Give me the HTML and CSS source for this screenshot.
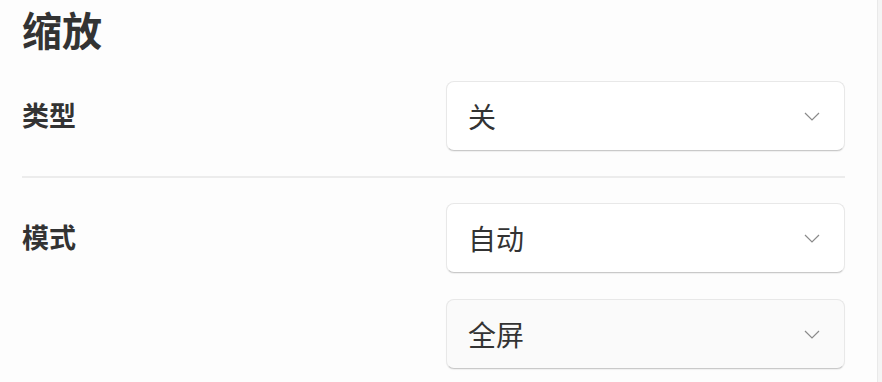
FILE: index.html
```html
<!DOCTYPE html>
<html lang="zh">
<head>
    <meta charset="UTF-8">
    <meta name="viewport" content="width=device-width, initial-scale=1.0">
    <title>缩放</title>
    <link rel="stylesheet" href="styles.css">
</head>
<body>
<div class="page">
    <div class="settings">
        <h1>缩放</h1>
        <div class="setting-row">
            <div class="setting-label">类型</div>
            <div class="setting-controls">
                <div class="select">
                    <span>关</span>
                    <svg class="chevron" viewBox="0 0 16 9"><path d="M1 1l7 7 7-7"/></svg>
                </div>
            </div>
        </div>
        <div class="divider"></div>
        <div class="setting-row">
            <div class="setting-label">模式</div>
            <div class="setting-controls">
                <div class="select">
                    <span>自动</span>
                    <svg class="chevron" viewBox="0 0 16 9"><path d="M1 1l7 7 7-7"/></svg>
                </div>
                <div class="select muted">
                    <span>全屏</span>
                    <svg class="chevron" viewBox="0 0 16 9"><path d="M1 1l7 7 7-7"/></svg>
                </div>
            </div>
        </div>
    </div>
    <div class="scrollbar"></div>
</div>
</body>
</html>
```

FILE: styles.css
```css
html, body {
    margin: 0;
    height: 100%;
}

body {
    font-family: "Noto Sans CJK SC", "Noto Sans", sans-serif;
    background-color: #fdfdfd;
    color: #333;
    overflow: hidden;
}

.page {
    display: flex;
    height: 100%;
}

.settings {
    flex: 1;
    padding: 0 32px 0 22px;
}

h1 {
    margin: 0;
    padding-top: 1px;
    font-size: 40px;
    line-height: 56px;
    font-weight: 700;
    color: #333;
}

.setting-row {
    display: flex;
    justify-content: space-between;
    align-items: flex-start;
}

.setting-row:first-of-type {
    margin-top: 24px;
}

.setting-label {
    font-size: 27px;
    font-weight: 700;
    line-height: 36px;
    padding-top: 16px;
}

.setting-controls {
    display: flex;
    flex-direction: column;
    gap: 26px;
    width: 399px;
}

.select {
    display: flex;
    align-items: center;
    justify-content: space-between;
    box-sizing: border-box;
    height: 70px;
    padding: 0 24px 0 21px;
    background-color: #fff;
    border: 1px solid #e8e8e8;
    border-bottom-color: #c9c9c9;
    border-radius: 8px;
    box-shadow: 0 1px 1px rgba(0, 0, 0, 0.06);
    font-size: 28px;
    color: #333;
}

.select.muted {
    background-color: #fafafa;
}

.chevron {
    width: 16px;
    height: 9px;
    fill: none;
    stroke: #8a8a8a;
    stroke-width: 1.2;
}

.divider {
    height: 2px;
    background-color: #ececec;
    margin: 25px 0;
}

.scrollbar {
    width: 4px;
    border-left: 1px solid #e9e9e9;
    background-color: #f4f4f4;
}
```
